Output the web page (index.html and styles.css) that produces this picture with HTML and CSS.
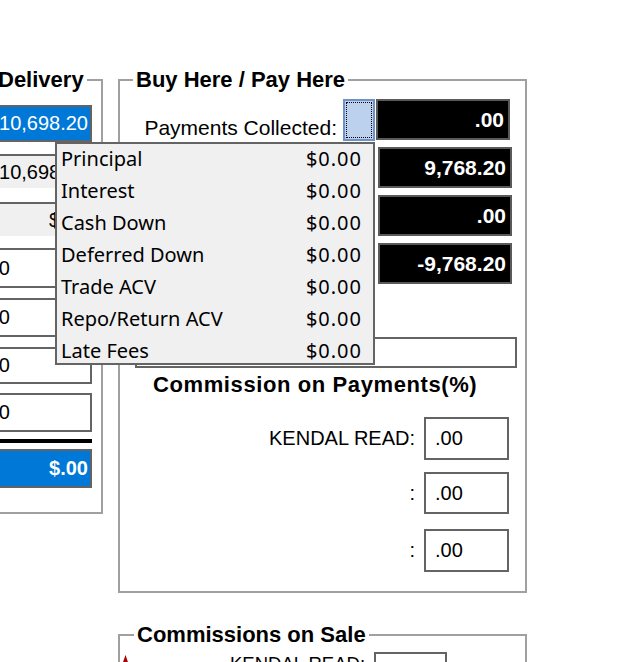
FILE: index.html
```html
<!DOCTYPE html>
<html lang="en">

<head>
    <meta charset="UTF-8">
    <meta name="viewport" content="width=device-width, initial-scale=1.0">
    <title>Deal - Buy Here / Pay Here</title>
    <link rel="stylesheet" href="styles.css">
</head>

<body>
    <div class="screen">

        <fieldset class="group delivery">
            <legend>Delivery</legend>
            <div class="delivery-body">
                <div class="field blue">10,698.20</div>
                <div class="field gray">10,698.20</div>
                <div class="field gray second">$.00</div>
                <div class="field plain f4">.00</div>
                <div class="field plain f5">.00</div>
                <div class="field plain f6">.00</div>
                <div class="field plain f7">.00</div>
                <div class="total-rule"></div>
                <div class="field blue total">$.00</div>
            </div>
        </fieldset>

        <div class="right-col">
            <fieldset class="group bhph">
                <legend>Buy Here / Pay Here</legend>

                <div class="pay-block">
                    <div class="pay-label">Payments Collected:</div>
                    <button class="pay-btn"></button>
                    <div class="dark-stack">
                        <div class="dark first">.00</div>
                        <div class="dark">9,768.20</div>
                        <div class="dark">.00</div>
                        <div class="dark">-9,768.20</div>
                    </div>
                </div>

                <div class="note-box"></div>

                <div class="comm-title">Commission on Payments(%)</div>

                <div class="rate-row r1">
                    <span class="rate-label">KENDAL READ:</span>
                    <div class="rate">.00</div>
                </div>
                <div class="rate-row r2">
                    <span class="rate-label">:</span>
                    <div class="rate">.00</div>
                </div>
                <div class="rate-row r3">
                    <span class="rate-label">:</span>
                    <div class="rate">.00</div>
                </div>
            </fieldset>

            <fieldset class="group sale">
                <legend>Commissions on Sale</legend>
                <div class="sale-row">
                    <svg class="err-mark" width="7" height="10" viewBox="0 0 7 10">
                        <polygon points="3.5,0 7,10 0,10" fill="#b00000" />
                    </svg>
                    <span class="sale-label">KENDAL READ:</span>
                    <div class="sale-box"></div>
                </div>
            </fieldset>
        </div>

        <!-- desplegable de pagos cobrados -->
        <div class="popup">
            <div class="pop-row"><span>Principal</span><span class="amt">$0.00</span></div>
            <div class="pop-row"><span>Interest</span><span class="amt">$0.00</span></div>
            <div class="pop-row"><span>Cash Down</span><span class="amt">$0.00</span></div>
            <div class="pop-row"><span>Deferred Down</span><span class="amt">$0.00</span></div>
            <div class="pop-row"><span>Trade ACV</span><span class="amt">$0.00</span></div>
            <div class="pop-row"><span>Repo/Return ACV</span><span class="amt">$0.00</span></div>
            <div class="pop-row"><span>Late Fees</span><span class="amt">$0.00</span></div>
        </div>

    </div>
</body>
</html>
```

FILE: styles.css
```css
html, body {
    margin: 0;
    padding: 0;
    background: #fff;
    overflow: hidden;
}

body {
    width: 632px;
    height: 662px;
    font-family: 'Liberation Sans', Arial, sans-serif;
    color: #000;
}

.screen {
    position: relative;
    display: flex;
    align-items: flex-start;
    padding-top: 67px;
    height: 662px;
    box-sizing: border-box;
}

/* group boxes */
.group {
    margin: 0;
    padding: 0;
    min-width: 0;
    border: 2px solid #a0a0a0;
    box-sizing: border-box;
}

.group legend {
    font-size: 22px;
    font-weight: bold;
    line-height: 26px;
    padding: 0 3px;
}

/* Delivery column, partly scrolled off to the left */
.delivery {
    width: 143px;
    margin-left: -40px;
}

.delivery legend {
    margin-left: 33px;
}

.delivery-body {
    padding: 12px 9px 24px 15px;
}

.field {
    box-sizing: border-box;
    border: 2px solid #646464;
    font-size: 20px;
    display: flex;
    align-items: center;
    white-space: nowrap;
    overflow: hidden;
}

.field.blue {
    height: 37px;
    background: #0078d7;
    color: #fff;
    justify-content: flex-end;
    padding-right: 2px;
}

.field.gray {
    height: 34px;
    margin-top: 12px;
    background: #f0f0f0;
    border-width: 2px 2px 0 0;
    justify-content: flex-end;
    padding-right: 2px;
}

.field.gray.second {
    margin-top: 14px;
}

.field.plain {
    background: #fff;
    padding-left: 3px;
}

.f4 { margin-top: 12px; height: 40px; }
.f5 { margin-top: 10px; height: 39px; }
.f6 { margin-top: 10px; height: 37px; }
.f7 { margin-top: 9px; height: 39px; }

.total-rule {
    height: 4px;
    margin-top: 7px;
    background: #000;
}

.field.blue.total {
    margin-top: 6px;
    height: 39px;
    font-weight: bold;
}

/* Buy Here / Pay Here */
.right-col {
    margin-left: 15px;
    width: 409px;
}

.bhph legend {
    margin-left: 13px;
}

.pay-block {
    display: flex;
    align-items: flex-start;
    margin-top: 6px;
}

.pay-label {
    width: 217px;
    text-align: right;
    font-size: 21px;
    line-height: 24px;
    margin-top: 17px;
    white-space: nowrap;
}

.pay-btn {
    width: 32px;
    height: 42px;
    margin: 0 0 0 6px;
    padding: 0;
    box-sizing: border-box;
    background: #bcd1ee;
    border: 2px solid #7191c4;
    outline: 1px dotted #000;
    outline-offset: -4px;
}

.dark-stack {
    margin-left: 1px;
}

.dark {
    width: 134px;
    height: 41px;
    box-sizing: border-box;
    margin: 7px 0 0 2px;
    border: 2px solid #5a5a5a;
    background: #000;
    color: #fff;
    font-size: 21px;
    font-weight: bold;
    display: flex;
    align-items: center;
    justify-content: flex-end;
    padding-right: 4px;
}

.dark.first {
    margin: 0;
}

.note-box {
    width: 382px;
    height: 31px;
    box-sizing: border-box;
    margin: 53px 0 0 15px;
    border: 2px solid #646464;
}

.comm-title {
    margin: 4px 0 0 33px;
    font-size: 22px;
    font-weight: bold;
    line-height: 25px;
    letter-spacing: 0.6px;
    white-space: nowrap;
}

.rate-row {
    display: flex;
    align-items: center;
    justify-content: flex-end;
    padding-right: 16px;
    font-size: 20px;
}

.rate-label {
    margin-right: 9px;
}

.rate {
    width: 85px;
    height: 43px;
    box-sizing: border-box;
    border: 2px solid #646464;
    padding-left: 9px;
    display: flex;
    align-items: center;
}

.r1 { margin-top: 20px; }
.r2 { margin-top: 12px; }
.r2 .rate { height: 42px; }
.r3 { margin-top: 15px; padding-bottom: 19px; }

/* Commissions on Sale */
.sale {
    margin-top: 29px;
}

.sale legend {
    margin-left: 14px;
}

.sale-row {
    display: flex;
    align-items: flex-start;
    margin-top: 4px;
    font-size: 18.5px;
    line-height: 23px;
}

.err-mark {
    margin: 3px 0 0 2px;
}

.sale-label {
    margin-left: 101px;
    margin-right: 9px;
}

.sale-box {
    width: 73px;
    height: 34px;
    box-sizing: border-box;
    border: 2px solid #646464;
}

/* popup list */
.popup {
    position: absolute;
    left: 55px;
    top: 142px;
    width: 320px;
    height: 223px;
    box-sizing: border-box;
    border: 2px solid #646464;
    background: #f0f0f0;
    overflow: hidden;
    font-family: 'Noto Sans', sans-serif;
    font-size: 20px;
}

.pop-row {
    display: flex;
    justify-content: space-between;
    height: 32px;
    line-height: 32px;
    padding: 0 12px 0 4px;
    margin-top: -1px;
}

.pop-row + .pop-row {
    margin-top: 0;
}

.amt {
    letter-spacing: 1px;
    margin-right: -1px;
}
```
